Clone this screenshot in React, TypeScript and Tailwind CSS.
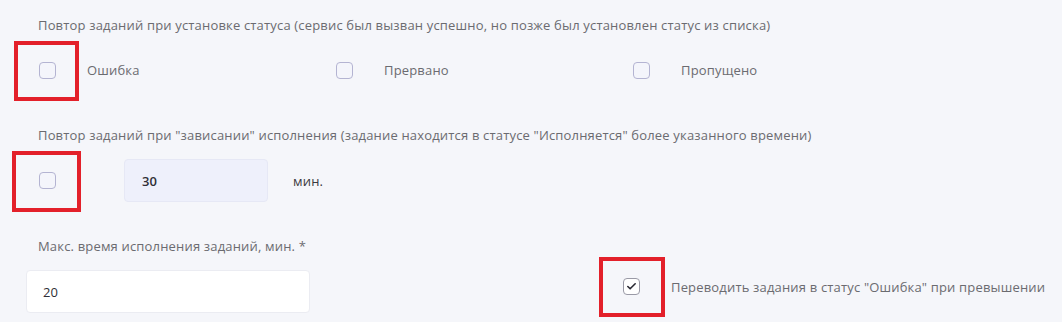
import { Check } from 'lucide-react';

const font = { fontFamily: '"Open Sans", "Noto Sans", sans-serif' };

function Box({ checked = false }: { checked?: boolean }) {
  return (
    <span
      className={
        checked
          ? 'flex h-[17px] w-[17px] shrink-0 items-center justify-center rounded-[4px] border border-[#9a9aa6] bg-white'
          : 'flex h-[17px] w-[17px] shrink-0 items-center justify-center rounded-[4px] border-[1.5px] border-[#b4b4d2] bg-[#f4f5fb]'
      }
    >
      {checked && <Check className="h-[11px] w-[11px] text-[#2a2a33]" strokeWidth={3.5} />}
    </span>
  );
}

function Option({ label }: { label: string }) {
  return (
    <div className="flex items-center gap-[31px]">
      <Box />
      <span>{label}</span>
    </div>
  );
}

export default function App() {
  return (
    <div
      className="relative h-[322px] w-[1062px] overflow-hidden bg-[#f5f6fa] text-[13px] leading-[18px] tracking-[0.17px] text-[#6b6b70]"
      style={font}
    >
      <div className="flex flex-col pl-[26px] pt-[16px]">
        {/* Status retry */}
        <div className="pl-[12px]">Повтор заданий при установке статуса (сервис был вызван успешно, но позже был установлен статус из списка)</div>
        <div className="mt-[27px] grid w-[904px] grid-cols-3 pl-[13px]">
          <Option label="Ошибка" />
          <Option label="Прервано" />
          <Option label="Пропущено" />
        </div>

        {/* Hang retry */}
        <div className="mt-[47px] pl-[12px]">
          Повтор заданий при "зависании" исполнения (задание находится в статусе "Исполняется" более указанного времени)
        </div>
        <div className="mt-[15px] flex items-center pl-[13px]">
          <Box />
          <div className="ml-[68px] flex h-[43px] w-[144px] items-center rounded-[4px] border border-[#e6e8f5] bg-[#eef0fb] pl-[17px] font-semibold text-[#2f2f36]">
            30
          </div>
          <span className="ml-[25px] text-[#3a3a40]">мин.</span>
        </div>

        {/* Max time */}
        <div className="mt-[35px] pl-[12px]">Макс. время исполнения заданий, мин. *</div>
        <div className="mt-[15px] flex items-center">
          <div className="flex h-[43px] w-[284px] items-center rounded-[4px] border border-[#ebecf2] bg-white pl-[16px] text-[#2f2f36]">20</div>
          <div className="ml-[313px] -mt-[10px] flex items-center gap-[31px]">
            <Box checked />
            <span>Переводить задания в статус "Ошибка" при превышении</span>
          </div>
        </div>
      </div>

      {/* annotation frames */}
      <div className="absolute left-[14px] top-[41px] h-[60px] w-[65px] border-[4px] border-[#e3202a]" />
      <div className="absolute left-[12px] top-[151px] h-[61px] w-[69px] border-[4px] border-[#e3202a]" />
      <div className="absolute left-[599px] top-[257px] h-[60px] w-[66px] border-[4px] border-[#e3202a]" />
    </div>
  );
}
